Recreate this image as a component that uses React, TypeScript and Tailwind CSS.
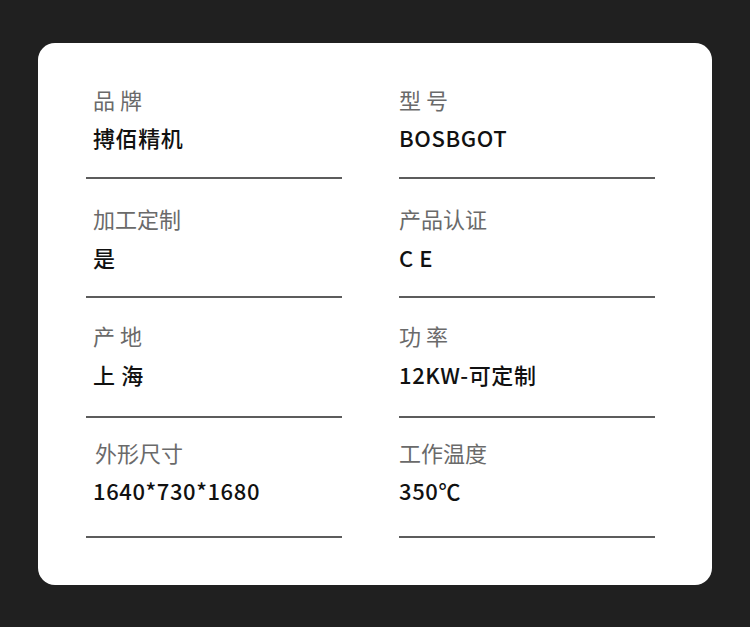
const rows = [
  {
    cls: "h-[136px] pt-[41px]",
    gap: "mt-[8px]",
    items: [
      { label: "品 牌", value: "搏佰精机" },
      { label: "型 号", value: "BOSBGOT" },
    ],
  },
  {
    cls: "h-[119px] pt-[24px]",
    gap: "mt-[9px]",
    items: [
      { label: "加工定制", value: "是" },
      { label: "产品认证", value: "C E" },
    ],
  },
  {
    cls: "h-[120px] pt-[22px]",
    gap: "mt-[9px]",
    items: [
      { label: "产 地", value: "上 海" },
      { label: "功 率", value: "12KW-可定制" },
    ],
  },
  {
    cls: "h-[120px] pt-[19px]",
    gap: "mt-[8px]",
    items: [
      { label: "外形尺寸", value: "1640*730*1680", shift: "pl-[2px]" },
      { label: "工作温度", value: "350℃" },
    ],
  },
];

export default function App() {
  return (
    <div
      className="w-[750px] h-[627px] bg-[#202020] pt-[43px] pl-[38px]"
      style={{ fontFamily: '"Noto Sans CJK SC", "Noto Sans", sans-serif' }}
    >
      <div className="w-[674px] h-[542px] bg-white rounded-[17px] pl-[48px]">
        {rows.map((row, i) => (
          <div key={i} className="flex gap-[57px]">
            {row.items.map((item, j) => (
              <div
                key={j}
                className={`w-[256px] border-b-[2px] border-[#5c5c5c] ${row.cls} ${
                  j === 0 ? "pl-[7px]" : "pl-0"
                }`}
              >
                <div
                  className={`text-[22px] leading-[30px] text-[#6a6a6a] ${
                    item.shift ?? ""
                  }`}
                >
                  {item.label}
                </div>
                <div
                  className={`${row.gap} text-[22px] leading-[30px] tracking-[0.6px] font-medium text-[#111]`}
                >
                  {item.value}
                </div>
              </div>
            ))}
          </div>
        ))}
      </div>
    </div>
  );
}
